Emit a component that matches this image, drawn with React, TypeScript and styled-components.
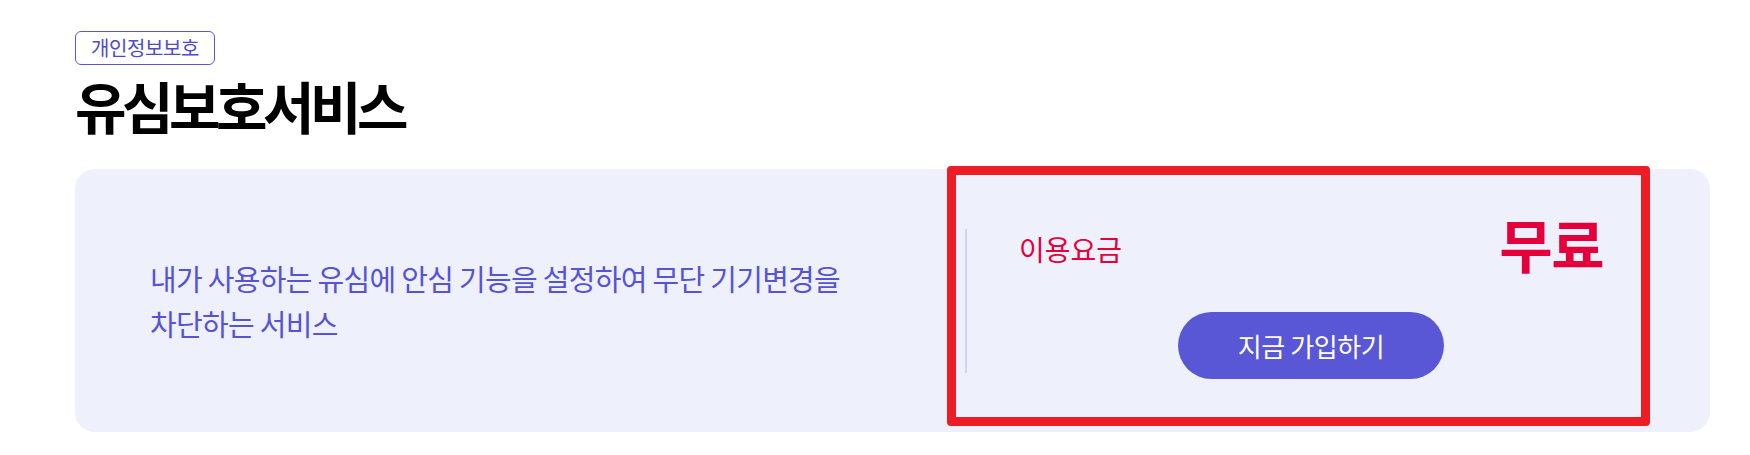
import { FC } from 'react';
import styled, { createGlobalStyle } from 'styled-components';

const GlobalStyle = createGlobalStyle`
  html, body {
    margin: 0;
    padding: 0;
    background: #fff;
  }
  body {
    font-family: 'Noto Sans CJK KR', 'Noto Sans', sans-serif;
  }
  * {
    box-sizing: border-box;
  }
`;

const App: FC = () => {
  return (
    <>
      <GlobalStyle />
      <Page>
        <Badge>개인정보보호</Badge>
        <Title>유심보호서비스</Title>
        <Card>
          <Description>
            내가 사용하는 유심에 안심 기능을 설정하여 무단 기기변경을
            <br />
            차단하는 서비스
          </Description>
          <Divider />
          <PriceBlock>
            <PriceRow>
              <PriceLabel>이용요금</PriceLabel>
              <PriceValue>무료</PriceValue>
            </PriceRow>
            <JoinButton type="button">지금 가입하기</JoinButton>
          </PriceBlock>
          <Highlight />
        </Card>
      </Page>
    </>
  );
};

export default App;

const Page = styled.div`
  width: 1750px;
  height: 455px;
  padding: 31px 40px 0 75px;
  display: flex;
  flex-direction: column;
  align-items: flex-start;
`;

const Badge = styled.span`
  display: inline-block;
  padding: 4px 15px;
  border: 1px solid #5b58d8;
  border-radius: 6px;
  font-size: 20px;
  line-height: 24px;
  letter-spacing: -0.4px;
  color: #4e4bcf;
`;

const Title = styled.h1`
  margin: 5px 0 0;
  font-size: 56px;
  line-height: 70px;
  font-weight: 700;
  letter-spacing: -4.5px;
  color: #000;
`;

const Card = styled.div`
  position: relative;
  margin-top: 29px;
  width: 100%;
  height: 263px;
  display: flex;
  align-items: center;
  padding: 0 107px 0 75px;
  background: #eef0fb;
  border-radius: 20px;
`;

const Description = styled.p`
  flex: 1;
  margin: 0;
  font-size: 29px;
  line-height: 45px;
  letter-spacing: -0.7px;
  color: #5654d4;
`;

const Divider = styled.div`
  width: 2px;
  height: 144px;
  background: #d3d3f2;
`;

const PriceBlock = styled.div`
  width: 584px;
  margin: 0 0 8px 52px;
  display: flex;
  flex-direction: column;
  align-items: center;
`;

const PriceRow = styled.div`
  width: 100%;
  height: 58px;
  display: flex;
  align-items: center;
  justify-content: space-between;
`;

const PriceLabel = styled.span`
  margin-top: 12px;
  font-size: 28px;
  line-height: 1;
  color: #e4003a;
`;

const PriceValue = styled.strong`
  font-size: 58px;
  line-height: 1;
  font-weight: 700;
  letter-spacing: -1.5px;
  color: #e4003a;
`;

const JoinButton = styled.button`
  margin-top: 40px;
  width: 266px;
  height: 67px;
  border: none;
  border-radius: 34px;
  background: #5957d6;
  color: #fff;
  font-family: inherit;
  font-size: 26px;
  letter-spacing: -0.4px;
  cursor: pointer;
`;

/* annotation box drawn over the price area */
const Highlight = styled.div`
  position: absolute;
  left: 872px;
  top: -3px;
  width: 703px;
  height: 260px;
  border: 9px solid #ee1c25;
  border-radius: 4px;
  pointer-events: none;
`;
